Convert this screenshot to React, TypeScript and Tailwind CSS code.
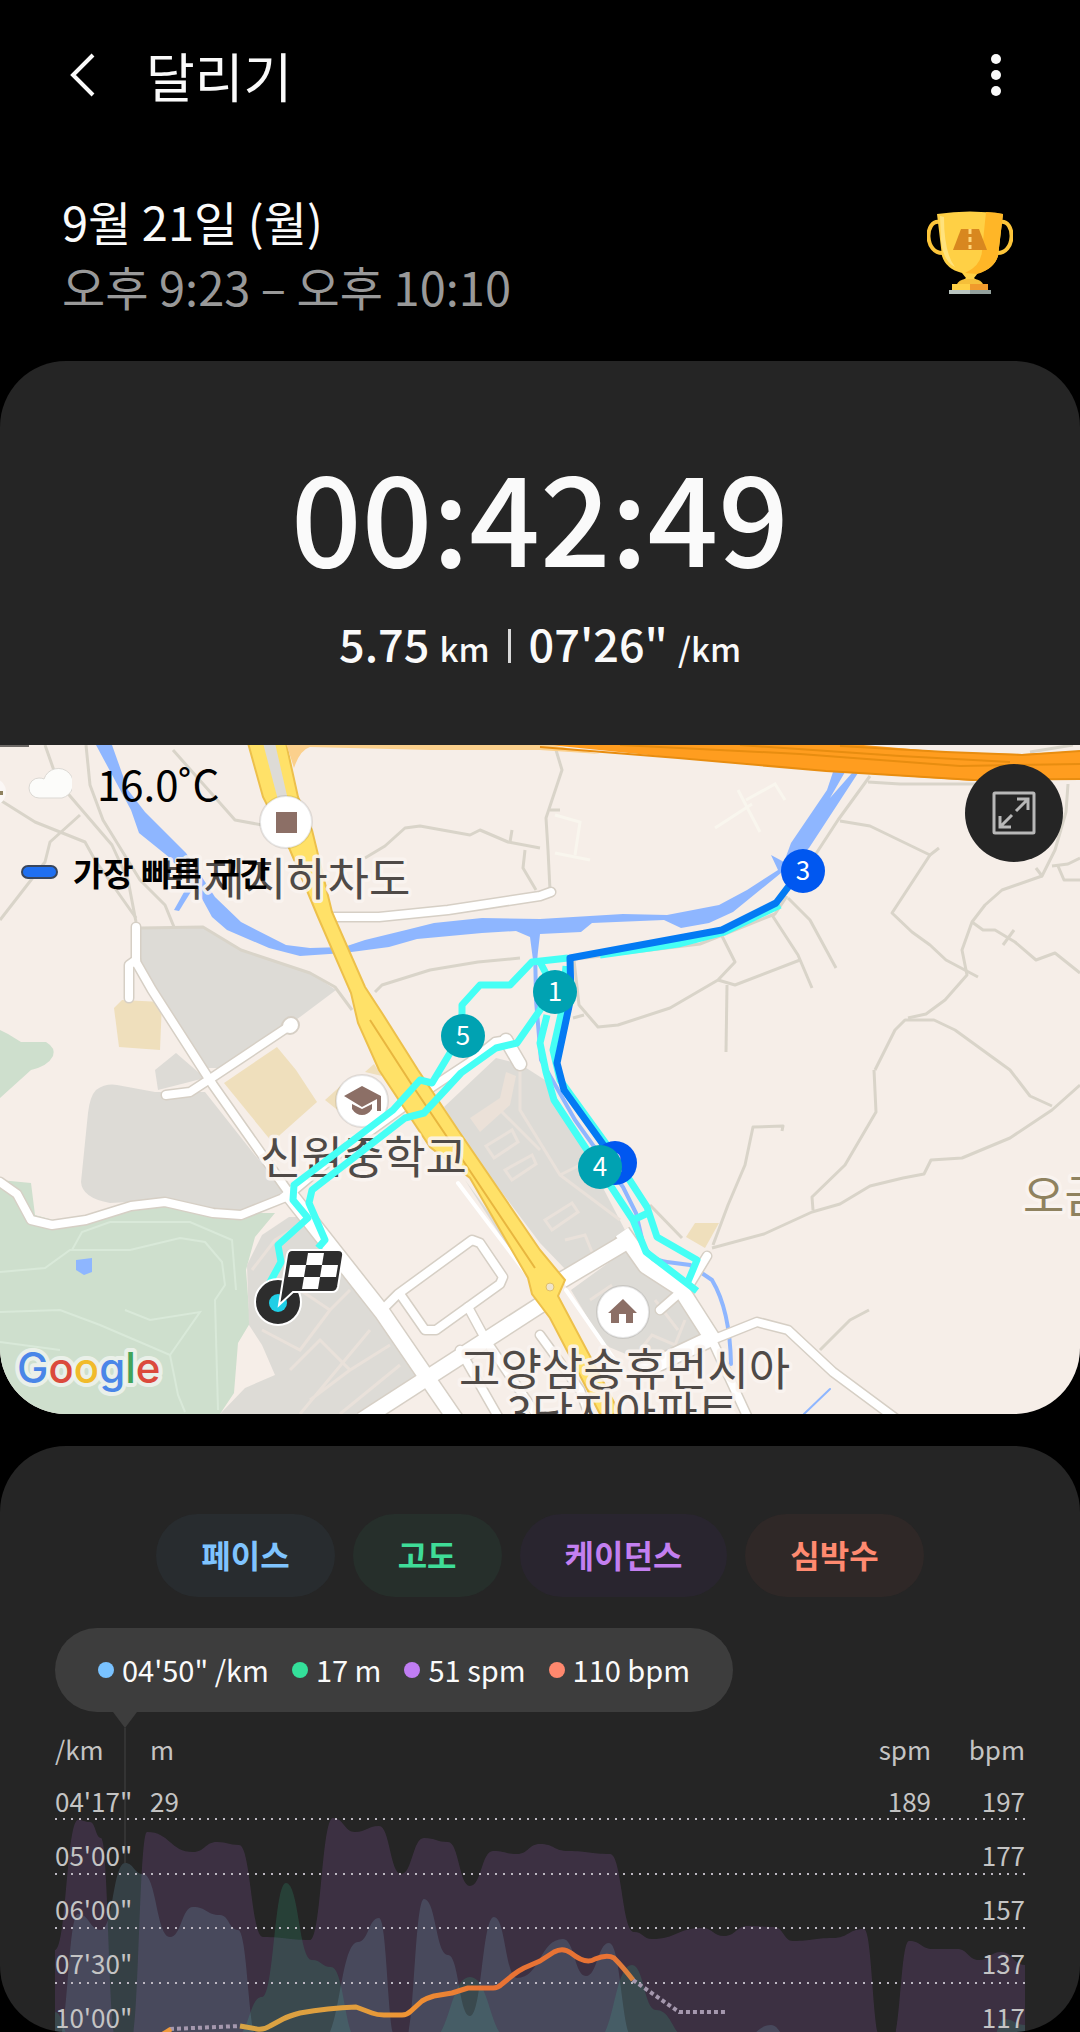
import { useState } from "react";

type Point = [number, number];

const FONT = "font-['Noto_Sans_CJK_KR',sans-serif]";

// Joins points with soft S-curves, flat at every point
function smooth(points: Point[]) {
  return points
    .map(([x, y], i) => {
      if (i === 0) return `M${x} ${y}`;
      const [px, py] = points[i - 1];
      const mid = (px + x) / 2;
      return `C${mid} ${py} ${mid} ${y} ${x} ${y}`;
    })
    .join(" ");
}

function area(points: Point[]) {
  const first = points[0];
  const last = points[points.length - 1];
  return `${smooth(points)} L${last[0]} 2040 L${first[0]} 2040 Z`;
}

const cadence: Point[][] = [
  [[55, 1950], [78, 1820], [90, 1822], [101, 1838], [116, 2040]],
  [
    [131, 2040], [147, 1832], [193, 1852], [217, 1842], [239, 1845], [263, 1937], [310, 1940], [333, 1818], [355, 1832],
    [379, 1826], [401, 1874], [424, 1838], [448, 1842], [470, 1886], [493, 1851], [517, 1854], [540, 1844],
    [568, 1851], [610, 1854], [634, 1932], [652, 1939], [702, 1928], [724, 1936], [748, 1926], [774, 1927],
    [793, 1941], [833, 1938], [864, 1929], [881, 2040],
  ],
  [[892, 2040], [909, 1941], [933, 1949], [957, 1949], [979, 1960], [1001, 1952], [1025, 1965]],
];

const pace: Point[][] = [
  [[58, 2040], [78, 1914], [101, 1930], [125, 1863], [143, 1874], [170, 1937], [193, 1907], [220, 1915], [238, 1930], [258, 2040]],
  [[322, 2040], [358, 1942], [379, 1918], [396, 2040]],
  [[405, 2040], [424, 1899], [448, 1955], [470, 2016], [494, 1917], [517, 1978], [563, 1939], [586, 1976], [609, 1943], [634, 2040]],
  [[745, 2036], [771, 2025], [787, 2036]],
];

const altitude: Point[][] = [
  [[55, 2012], [72, 2040]],
  [[236, 2036], [262, 1997], [286, 1883], [312, 1960], [331, 1967], [358, 2040]],
  [[430, 2040], [470, 1977], [510, 2040]],
  [[596, 2040], [632, 1965], [656, 2010], [690, 2040]],
  [[991, 2040], [1004, 2019], [1025, 2025]],
];

const heartRate =
  "M240 2026 L257 2029 Q264 2030 270 2026 L283 2019 Q289 2016 300 2013 Q328 2008 356 2007 L372 2013 Q377 2015 384 2015 H402 Q407 2015 411 2011 L422 2001 Q427 1998 434 1996 L452 1993 L468 1988 H493 Q498 1988 502 1984 L513 1975 Q518 1971 524 1968 L540 1961 L554 1952 Q563 1947 571 1953 Q586 1965 595 1959 Q607 1954 614 1958 Q622 1966 633 1980";

const metrics = [
  { id: "pace", label: "페이스", chip: "bg-[#282c2f] text-[#7fc4ff]", dot: "bg-[#79c2ff]", value: "04'50\" /km" },
  { id: "altitude", label: "고도", chip: "bg-[#262f2b] text-[#3fdc98]", dot: "bg-[#34e09a]", value: "17 m" },
  { id: "cadence", label: "케이던스", chip: "bg-[#29252f] text-[#c37ff0]", dot: "bg-[#c07df3]", value: "51 spm" },
  { id: "heart", label: "심박수", chip: "bg-[#2f2827] text-[#ff8a70]", dot: "bg-[#ff886e]", value: "110 bpm" },
];

const axisRows = [
  { pace: "04'17\"", altitude: "29", cadence: "189", heart: "197" },
  { pace: "05'00\"", altitude: "", cadence: "", heart: "177" },
  { pace: "06'00\"", altitude: "", cadence: "", heart: "157" },
  { pace: "07'30\"", altitude: "", cadence: "", heart: "137" },
  { pace: "10'00\"", altitude: "", cadence: "", heart: "117" },
];

const minorRoads = [
  "M45 745 L58 782 L112 845 L128 880 L136 922",
  "M86 745 L90 785 L103 820 L140 880 L165 905 L174 927",
  "M0 800 L35 822 L85 842 L95 860 L136 918",
  "M80 815 L50 842 L45 862 L0 920",
  "M173 750 L235 820 L262 825",
  "M141 928 L203 927 L241 950 L310 973 L335 987 L352 1010",
  "M375 992 L382 985 L430 970 L478 962 L520 958",
  "M365 858 L385 846 L405 828 L420 826 L470 835 L480 830 L508 842 L540 848",
  "M510 842 L512 830",
  "M525 850 L523 868 L536 890",
  "M556 750 L562 770 L546 818 L548 850 L550 890",
  "M550 810 L560 810",
  "M870 776 L838 820 L808 866",
  "M868 782 L900 784 L975 784",
  "M840 821 L870 826 L930 855 L939 848",
  "M930 855 L892 913 L912 932 L930 945 L946 960 L978 977",
  "M1068 784 L1066 812 L1055 850 L1042 876 L1036 868",
  "M1042 876 L1002 890 L985 905 L972 922 L962 950 L967 975 L945 1000 L926 1014 L908 1018",
  "M1052 866 L1068 864 L1080 858",
  "M1058 866 L1064 880 L1080 880",
  "M972 922 L983 930 L995 930 L1015 942 L1036 960 L1055 953 L1080 973",
  "M1003 945 L1014 930",
  "M568 960 L700 944 L775 914 L787 896",
  "M722 936 L735 962 L718 980 L670 1008 L618 1025 L598 1027 L579 1005 L574 960",
  "M718 980 L735 985 L800 960",
  "M727 985 L726 1052",
  "M772 915 L798 955 L812 988",
  "M788 898 L810 920 L836 968",
  "M573 1018 L584 1015",
  "M1080 1085 L1052 1110 L1010 1138 L962 1158 L931 1160 L924 1174 L903 1178 L870 1186 L840 1204 L812 1212 L764 1234 L712 1248",
  "M875 1070 L895 1030 L905 1020 L934 1020 L955 1030 L1010 1070 L1030 1096 L1052 1106",
  "M874 1070 L876 1112 L845 1165 L812 1197 L813 1210",
  "M782 1131 L783 1126 L753 1127 L745 1165 L728 1205 L713 1245",
  "M650 1205 L682 1238",
  "M869 1310 L850 1320 L820 1350",
  "M1030 752 L1073 745",
];

const streets = [
  "M136 927 L136 962 L152 990 L213 1085 L289 1193",
  "M129 998 L129 965 L136 960",
  "M291 1025 L213 1077 L190 1092 L166 1095",
  "M331 917 L379 917 L448 910 L540 896 L551 892",
  "M0 1182 L17 1194 L31 1220 L52 1225 L86 1220 L131 1206 L165 1202 L213 1213 L241 1215 L286 1197 L330 1160 L420 1095 L470 1062 L495 1042 L508 1040 L518 1062",
  "M382 1310 L398 1294 L472 1240 L480 1243 L503 1277 L500 1284 L436 1330 L425 1330 L400 1294",
  "M468 1307 L487 1342 L540 1420",
  "M707 1256 L690 1284",
  "M460 1350 L500 1420",
  "M712 1340 L757 1322 L788 1330 L833 1372 L895 1418",
  "M712 1340 L735 1390 L748 1418",
  "M660 1310 L676 1296",
  "M540 1335 L580 1390 L590 1418",
];

const mainStreets = [
  "M286 1190 L382 1312 L456 1420",
  "M362 1420 L548 1300",
  "M562 1280 L626 1242",
  "M622 1232 L646 1266 L680 1288 L712 1338",
  "M712 1338 L640 1372",
];

const cyanTracks = [
  "M269 1284 L281 1262 L278 1245 L308 1218 L293 1200 L294 1185 L393 1110 L420 1080 L432 1083 L450 1053 L462 1030 L462 1005 L480 985 L510 985 L532 962 L568 958",
  "M318 1248 L325 1240 L309 1203 L312 1190 L405 1118 L424 1113 L461 1073 L496 1048 L517 1043 L540 1010 L552 985 L540 962",
  "M547 1015 L540 1043 L546 1072 L554 1100 L585 1147 L633 1220 L646 1252 L697 1291",
  "M566 966 L562 1010 L553 1050 L560 1080 L607 1145 L647 1207 L657 1237 L697 1260 L687 1284",
  "M633 1220 L648 1213",
  "M600 955 L678 944 L724 932 L780 905",
];

function KmMarker({ x, y, label, color }: { x: number; y: number; label: string; color: string }) {
  return (
    <g>
      <circle cx={x} cy={y} r="22" fill={color} />
      <text x={x} y={y + 9} textAnchor="middle" fontSize="26" fill="#fff">
        {label}
      </text>
    </g>
  );
}

function RouteMap() {
  return (
    <svg
      viewBox="0 745 1080 669"
      preserveAspectRatio="xMidYMid slice"
      className="block h-full w-full"
      role="img"
      aria-label="달리기 경로 지도"
      fontFamily="'Noto Sans CJK KR', sans-serif"
    >
      <rect x="0" y="745" width="1080" height="669" fill="#f6eee8" />

      {/* Parks */}
      <g fill="#cedfcd">
        <path d="M0 1030 L8 1034 L21 1042 L46 1042 Q56 1048 53 1056 Q48 1066 31 1070 L0 1098 Z" />
        <path d="M0 1180 L31 1183 L35 1215 L60 1222 L131 1206 L165 1202 L213 1213 L275 1213 L255 1237 L246 1270 L250 1323 L238 1343 L234 1393 L220 1414 L0 1414 Z" />
      </g>
      <g fill="none" stroke="#d9e9d9" strokeWidth="2">
        <path d="M0 1272 L45 1268 L70 1250 L130 1250 L180 1238 L205 1242 L222 1262 L225 1285 L215 1300 L218 1410" />
        <path d="M0 1312 L60 1310 L100 1325 L170 1355 L200 1312 L150 1320 L125 1310" />
        <path d="M170 1355 L178 1395 L185 1412 M72 1250 L82 1232 L110 1222 L190 1222 L232 1240 L236 1290 M0 1342 L60 1350" />
      </g>
      <path d="M76 1260 L92 1258 L92 1272 L84 1275 L76 1270 Z" fill="#8eb6ff" />

      {/* Built-up blocks */}
      <g fill="#dddbd6">
        <path d="M141 927 L203 927 L241 949 L310 973 L336 990 L300 1017 L224 1068 L207 1068 L152 990 L141 963 Z" />
        <path d="M96 1090 Q106 1083 117 1085 L155 1092 L205 1092 L285 1193 L241 1213 L165 1200 L110 1203 Q82 1198 81 1182 L88 1113 Q90 1096 96 1090 Z" />
        <path d="M155 1070 L176 1053 L205 1078 L158 1090 Z" />
        <path d="M289 1217 L262 1235 L247 1265 L249 1325 L262 1345 L275 1375 L245 1388 L220 1414 L366 1414 L424 1376 L375 1310 L302 1217 Z" />
        <path d="M444 1107 L496 1058 L520 1064 L545 1080 L578 1140 L626 1232 L566 1270 L540 1243 L470 1150 Z" />
        <path d="M626 1250 L644 1272 L676 1292 L706 1336 L645 1362 L604 1345 L571 1290 Z" />
        <path d="M465 1180 L535 1275 L532 1285 Z" />
      </g>
      <g fill="none" stroke="#e9e1da" strokeWidth="3">
        <path d="M252 1270 L275 1240 L300 1225 M262 1330 L300 1350 L330 1310 L300 1290 M330 1310 L350 1290 M290 1370 L320 1340 L350 1370 L390 1345 M310 1400 L350 1370 M300 1414 L370 1330 M340 1414 L400 1365" />
        <path d="M486 1146 L512 1130 L518 1142 L494 1158 Z M505 1170 L532 1155 L536 1164 L512 1180 Z M545 1220 L572 1203 L578 1212 L552 1230 Z" />
        <path d="M520 1070 L520 1110 L560 1175 L620 1220 M500 1110 L540 1150 M565 1240 L585 1235 L592 1252 M560 1175 L590 1160" />
        <path d="M590 1300 L612 1285 M640 1350 L652 1335 L675 1345 L685 1320 M655 1300 L678 1330" />
      </g>
      <path d="M470 1118 L500 1098 L506 1072 L516 1076 L510 1105 L480 1132 Z" fill="#ebe1d8" />
      <g fill="#efdfbc">
        <path d="M114 1008 L122 1000 L162 1002 L160 1050 L119 1047 Z" />
        <path d="M224 1083 L277 1047 L296 1070 L317 1102 L272 1142 Z" />
        <path d="M325 1100 L345 1082 L356 1100 L340 1112 Z" />
        <path d="M365 1072 L374 1064 L382 1076 Z" />
        <path d="M695 1223 L719 1223 L705 1248 L686 1237 Z" />
      </g>
      <path d="M715 828 L752 804 M738 790 L760 832 M746 800 L775 784 L785 800 M555 815 L580 822 L575 855 M555 853 L590 860" fill="none" stroke="#f9f6ee" strokeWidth="3" />

      {/* River */}
      <g fill="#8eb6ff">
        <path d="M96 745 L112 745 L128 790 L145 812 L186 853 L215 897 L241 922 L286 945 L310 948 L344 947 L365 940 L406 930 L434 923 L482 918 L540 919 L623 914 L667 915 L719 905 L747 890 L778 870 L771 855 L784 862 L791 843 L827 790 L833 772 L845 772 L830 798 L852 773 L858 773 L809 848 L781 873 L760 890 L733 912 L709 923 L681 928 L664 920 L592 923 L581 932 L540 934 L537 960 L533 960 L530 937 L516 931 L482 933 L417 939 L389 947 L344 953 L300 956 L269 948 L227 930 L212 917 L200 895 L170 858 L139 833 L131 810 Z" />
        <path d="M188 885 L174 910 L179 911 L192 890 Z" />
      </g>
      <g fill="none" stroke="#8eb6ff" strokeWidth="4" strokeLinecap="round">
        <path d="M535 945 L536 1000 L541 1060 L575 1120 L623 1187 L636 1213 L643 1243 Q650 1260 667 1262 L690 1265 L712 1280 Q730 1310 731 1364" />
        <path d="M830 1389 L804 1414" strokeWidth="2" />
      </g>

      {/* Roads */}
      <g fill="none" stroke="#d9d4c9" strokeWidth="3" strokeLinejoin="round">
        {minorRoads.map((d) => (
          <path key={d} d={d} />
        ))}
      </g>
      <g fill="none" stroke="#d6cfc5" strokeWidth="11" strokeLinecap="round" strokeLinejoin="round">
        {streets.map((d) => (
          <path key={d} d={d} />
        ))}
        <path d="M506 1040 L520 1064" strokeWidth="15" />
        <path d="M291 1025 L290 1026" strokeWidth="18" />
      </g>
      <g fill="none" stroke="#d6cfc5" strokeWidth="18" strokeLinejoin="round">
        {mainStreets.map((d) => (
          <path key={d} d={d} />
        ))}
      </g>
      <g fill="none" stroke="#fff" strokeWidth="8" strokeLinecap="round" strokeLinejoin="round">
        {streets.map((d) => (
          <path key={d} d={d} />
        ))}
        <path d="M506 1040 L520 1064" strokeWidth="12" />
        <path d="M291 1025 L290 1026" strokeWidth="14" />
        <path d="M458 1183 L545 1298 M566 1290 L625 1375" strokeWidth="4" />
      </g>
      <g fill="none" stroke="#fff" strokeWidth="15" strokeLinejoin="round">
        {mainStreets.map((d) => (
          <path key={d} d={d} />
        ))}
      </g>

      {/* Arterial */}
      <path
        d="M248 743 L286 743 L298 797 L312 830 L332 912 L365 987 L382 1013 L418 1070 L458 1130 L540 1250 L565 1280 L558 1296 L592 1360 L620 1414 L600 1414 L550 1318 L532 1294 L528 1278 L470 1178 L430 1147 L379 1070 L358 1023 L351 993 L318 917 L290 850 L263 797 Z"
        fill="#ffe168"
        stroke="#edc04b"
        strokeWidth="2"
      />
      <path d="M263 743 L275 743 L288 800 L278 800 Z" fill="#dddbd6" />
      <path d="M370 1020 L412 1085 L468 1168 L535 1268" fill="none" stroke="#e8b63f" strokeWidth="2" />
      <circle cx="550" cy="1287" r="4" fill="#eee4cc" stroke="#e0c068" />

      {/* Expressway */}
      <path d="M286 743 L540 743 L600 754 L540 750 L430 750 L310 747 Q300 750 294 768 Z" fill="#fbd08c" />
      <path d="M530 743 L840 743 L946 752 L1022 754 L1080 751 L1080 779 L974 781 L826 771 L678 758 Z" fill="#ff9d1f" />
      <path d="M540 747 L678 758 L826 771 L974 780 L1080 779 M620 745 L800 754 L960 766 L1080 764 M740 745 L900 756 L1010 762 M840 746 L946 752 L1022 755 L1080 751" fill="none" stroke="#e88d10" strokeWidth="2" />

      {/* Places */}
      <g fill="#fff" stroke="#00000018" strokeWidth="2">
        <circle cx="286" cy="822" r="26" />
        <circle cx="362" cy="1101" r="26" />
        <circle cx="623" cy="1312" r="26" />
      </g>
      <g fill="#8c6f66">
        <rect x="276" y="812" width="21" height="21" />
        <path d="M344 1096 L362 1086 L381 1096 L381 1111 L377 1111 L377 1099 L362 1107 Z" />
        <path d="M352 1104 L362 1109 L372 1104 L372 1109 Q368 1115 362 1115 Q356 1115 352 1109 Z" />
        <path d="M608 1313 L623 1299 L637 1313 L633 1313 L633 1323 L626 1323 L626 1314 L619 1314 L619 1323 L611 1323 L611 1313 Z" />
      </g>
      <g fontSize="45" fill="#4f4a47" stroke="#faf4f0" strokeOpacity="0.9" strokeWidth="7" strokeLinejoin="round" paintOrder="stroke">
        <text x="162" y="896">백제지하차도</text>
        <text x="260" y="1174">신원중학교</text>
        <text x="459" y="1386">고양삼송휴먼시아</text>
        <text x="507" y="1430">3단지아파트</text>
        <text x="1023" y="1213" fill="#8f825f">오금</text>
      </g>
      <rect x="0" y="745" width="29" height="2" fill="#6d6966" />
      <circle cx="-8" cy="792" r="14" fill="#fbf7f5" />
      <rect x="0" y="791" width="3" height="4" fill="#8f825f" />

      {/* Track */}
      <g fill="none" stroke="#45fff5" strokeWidth="7" strokeLinejoin="round">
        {cyanTracks.map((d) => (
          <path key={d} d={d} />
        ))}
      </g>
      <path d="M605 1147 L564 1090 L557 1063 L571 997 L570 958 L722 930 L776 903 L792 882" fill="none" stroke="#047af3" strokeWidth="7" strokeLinejoin="round" />
      <KmMarker x={555} y={992} label="1" color="#00a2b2" />
      <KmMarker x={615} y={1163} label="2" color="#0057f0" />
      <KmMarker x={803} y={871} label="3" color="#0057f0" />
      <KmMarker x={600} y={1167} label="4" color="#00a2b2" />
      <KmMarker x={463} y={1036} label="5" color="#00a2b2" />

      {/* Finish flag */}
      <circle cx="278" cy="1302" r="23" fill="#2d2d2d" stroke="#fff" strokeWidth="2" />
      <circle cx="278" cy="1303" r="9" fill="#1fcfe6" />
      <path d="M292 1250 H338 Q344 1250 343 1256 L338 1287 Q337 1292 332 1292 H293 L279 1305 L287 1255 Q288 1250 292 1250 Z" fill="#2d2d2d" stroke="#fff" strokeWidth="2" />
      <g fill="#fff">
        <path d="M308 1253 H324 L322 1265 H306 Z" />
        <path d="M290 1265 H306 L304 1277 H288 Z" />
        <path d="M322 1265 H338 L336 1277 H320 Z" />
        <path d="M304 1277 H320 L318 1289 H302 Z" />
      </g>

      <text x="17" y="1383" fontSize="42" fontWeight="500" fontFamily="Inter, sans-serif" stroke="#f2f6f1" strokeOpacity="0.8" strokeWidth="8" strokeLinejoin="round" paintOrder="stroke">
        <tspan fill="#4a86e8">G</tspan>
        <tspan fill="#db4a3c">o</tspan>
        <tspan fill="#f1bb2b">o</tspan>
        <tspan fill="#4a86e8">g</tspan>
        <tspan fill="#42a45a">l</tspan>
        <tspan fill="#db4a3c">e</tspan>
      </text>
    </svg>
  );
}

function Trophy() {
  return (
    <svg viewBox="0 0 86 84" className="h-[84px] w-[86px]" role="img" aria-label="최고 기록">
      <path d="M13 11 C-3 8 -3 44 17 42 M73 11 C89 8 89 44 69 42" fill="none" stroke="#fdc53a" strokeWidth="4" />
      <path d="M10 3 Q43 -2 76 3 L71 45 Q67 58 51 62 L47 67 L55 74 H30 L39 67 L35 62 Q19 58 15 45 Z" fill="#ffd045" />
      <path d="M59 1 Q68 1 76 3 L71 45 Q67 58 50 63 L38 62 Q54 55 55 40 Z" fill="#ffb627" />
      <path d="M13 5 L17 6 Q17 42 28 56 Q16 50 14 30 Z" fill="#ffe27c" />
      <path d="M34 18 H52 L60 39 H26 Z" fill="#d8871f" />
      <path d="M43 18 V38" stroke="#ffd67a" strokeWidth="3" strokeDasharray="5 3" />
      <path d="M30 73 Q32 69 38 68 H48 Q54 69 56 73 Z" fill="#f5bf3a" />
      <rect x="25" y="73" width="18" height="6" fill="#ffd045" />
      <rect x="43" y="73" width="18" height="6" fill="#f09a2c" />
      <rect x="22" y="79" width="21" height="4" fill="#b9c4bf" />
      <rect x="43" y="79" width="21" height="4" fill="#93a09c" />
    </svg>
  );
}

function Chart() {
  return (
    <svg viewBox="55 1712 970 320" preserveAspectRatio="none" className="absolute inset-0 h-full w-full" aria-hidden="true">
      <defs>
        <linearGradient id="heart" gradientUnits="userSpaceOnUse" x1="240" y1="0" x2="633" y2="0">
          <stop offset="0" stopColor="#d9a444" />
          <stop offset="0.3" stopColor="#e29d3c" />
          <stop offset="0.42" stopColor="#f09433" />
          <stop offset="0.62" stopColor="#e87334" />
          <stop offset="0.94" stopColor="#e87334" />
          <stop offset="1" stopColor="#d98440" />
        </linearGradient>
      </defs>
      <g fill="#b068d8" fillOpacity="0.17">
        {cadence.map((p, i) => <path key={i} d={area(p)} />)}
      </g>
      <g fill="#30b080" fillOpacity="0.2">
        {altitude.map((p, i) => <path key={i} d={area(p)} />)}
      </g>
      <g fill="#79adc8" fillOpacity="0.2">
        {pace.map((p, i) => <path key={i} d={area(p)} />)}
      </g>
      <g stroke="#bdb8c2" strokeWidth="2" strokeDasharray="2 6">
        <path d="M55 1819 H1025" />
        <path d="M55 1874 H1025" />
        <path d="M55 1928 H1025" />
        <path d="M55 1983 H1025" />
      </g>
      <path d="M113 1712 H137 L125 1728 Z" fill="#3d3d3d" />
      <path d="M125 1728 V1863" stroke="#454545" />
      <g fill="none" stroke="#a598ae" strokeWidth="4" strokeDasharray="4 3">
        <path d="M170 2029 L240 2026" />
        <path d="M633 1980 L679 2012 H727" />
      </g>
      <path d="M163 2034 L171 2029" stroke="#ef9a3c" strokeWidth="5" />
      <path d={heartRate} fill="none" stroke="url(#heart)" strokeWidth="5" strokeLinejoin="round" />
    </svg>
  );
}

export default function App() {
  const [shown, setShown] = useState<string[]>(metrics.map((m) => m.id));

  function toggle(id: string) {
    setShown(shown.includes(id) ? shown.filter((s) => s !== id) : [...shown, id]);
  }

  return (
    <main className={`flex h-screen flex-col overflow-hidden bg-black text-[#fafafa] ${FONT}`}>
      <header className="flex h-[150px] shrink-0 items-center px-[62px]">
        <button type="button" aria-label="뒤로" className="flex w-[84px] items-center">
          <svg viewBox="0 0 36 44" className="h-11 w-9" fill="none" stroke="currentColor" strokeWidth="4">
            <path d="M31 2 L11 22 L31 42" />
          </svg>
        </button>
        <h1 className="flex-1 text-[53px] leading-[64px]">달리기</h1>
        <button type="button" aria-label="더보기" className="flex w-11 justify-center">
          <svg viewBox="0 0 12 44" className="h-11 w-3" fill="currentColor">
            <circle cx="6" cy="6" r="5" />
            <circle cx="6" cy="22" r="5" />
            <circle cx="6" cy="38" r="5" />
          </svg>
        </button>
      </header>

      <section className="flex shrink-0 items-center justify-between pt-[38px] pr-[67px] pb-[43px] pl-[62px] text-[47px] leading-[65px]">
        <div>
          <p>9월 21일 (월)</p>
          <p className="text-[#999]">오후 9:23 – 오후 10:10</p>
        </div>
        <Trophy />
      </section>

      <section className="shrink-0 overflow-hidden rounded-[66px] bg-[#252525]">
        <div className="flex h-96 flex-col items-center pt-20">
          <p className="text-[124px] leading-[144px] font-medium">00:42:49</p>
          <div className="mt-[22px] flex items-center text-[45px] leading-[72px] font-medium">
            <p>
              5.75 <span className="text-[33px]">km</span>
            </p>
            <span className="mx-[18px] h-[34px] w-[3px] bg-[#d8d8d8]" />
            <p>
              07'26" <span className="text-[33px]">/km</span>
            </p>
          </div>
        </div>

        <div className="relative aspect-[1080/669] w-full">
          <RouteMap />
          <div className="absolute top-3 left-7 flex items-center gap-[25px] text-[42px] leading-[52px] text-black">
            <svg viewBox="0 0 44 32" className="h-8 w-11" aria-hidden="true">
              <path d="M11 31 A10 10 0 0 1 11 11 Q14 11 16 12 A15 15 0 1 1 34 31 Z" fill="#fcfcfa" stroke="#dcd9d4" />
            </svg>
            16.0˚C
          </div>
          <div className="absolute top-[104px] left-[21px] flex items-center gap-[15px] text-[33px] leading-[46px] font-bold text-black">
            <span className="h-[14px] w-[37px] rounded-full border-2 border-[#39465c] bg-[#1f6ff0]" />
            가장 빠른 구간
          </div>
          <button
            type="button"
            aria-label="지도 확대"
            className="absolute top-[19px] right-[17px] flex h-[98px] w-[98px] items-center justify-center rounded-full bg-[#252525] text-[#b8b8b8]"
          >
            <svg viewBox="0 0 44 44" className="h-11 w-11" fill="none" stroke="currentColor" strokeWidth="3">
              <rect x="2" y="2" width="40" height="40" rx="1" />
              <path d="M24 20 L35 9 M25 8 H36 V19 M20 24 L9 35 M8 25 V36 H19" />
            </svg>
          </button>
        </div>
      </section>

      <section className="mt-8 min-h-0 flex-1 overflow-hidden rounded-[66px] bg-[#252525] px-[55px] pt-[68px]">
        <div className="flex justify-center gap-[18px]">
          {metrics.map((m) => (
            <button
              key={m.id}
              type="button"
              aria-pressed={shown.includes(m.id)}
              onClick={() => toggle(m.id)}
              className={`h-[83px] rounded-full px-[45px] pb-1 text-[32px] font-bold ${m.chip}`}
            >
              {m.label}
            </button>
          ))}
        </div>

        <div className="mt-[31px] flex h-[84px] w-fit items-center gap-[23px] rounded-full bg-[#3d3d3d] px-[43px] text-[29px]">
          {metrics.map((m) => (
            <span key={m.id} className="flex items-center gap-2">
              <span className={`h-4 w-4 rounded-full ${m.dot}`} />
              {m.value}
            </span>
          ))}
        </div>

        <div className="relative h-80">
          <Chart />
          <table className="relative w-full table-fixed text-[26px] text-[#c4c4c4]">
            <thead>
              <tr className="h-[62px] text-left leading-[40px]">
                <th className="w-[95px] pt-3 font-normal">/km</th>
                <th className="pt-3 font-normal">m</th>
                <th className="pt-3 text-right font-normal">spm</th>
                <th className="w-[94px] pt-3 text-right font-normal">bpm</th>
              </tr>
            </thead>
            <tbody>
              {axisRows.map((row) => (
                <tr key={row.pace} className="h-[54px] leading-[40px]">
                  <td>{row.pace}</td>
                  <td>{row.altitude}</td>
                  <td className="text-right">{row.cadence}</td>
                  <td className="text-right">{row.heart}</td>
                </tr>
              ))}
            </tbody>
          </table>
        </div>
      </section>
    </main>
  );
}
